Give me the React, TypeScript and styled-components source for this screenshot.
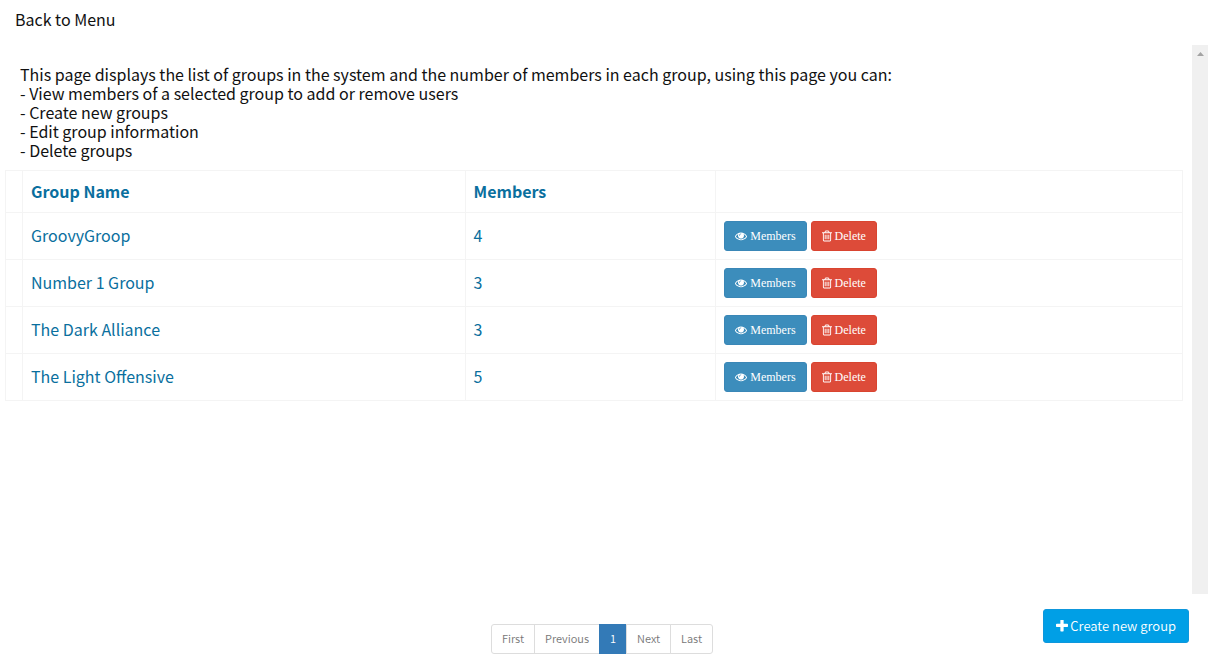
import React from "react";
import styled, { createGlobalStyle, css } from "styled-components";

const GlobalStyle = createGlobalStyle`
  *, *::before, *::after { box-sizing: border-box; }
  body {
    margin: 0;
    background: #fff;
    color: #111;
    font: 16px/19px "Noto Sans CJK SC", "Noto Sans", sans-serif;
  }
`;

const Page = styled.div`
  display: flex;
  flex-direction: column;
  min-height: 100vh;
`;

const Header = styled.header`
  padding: 10px 15px 16px;
`;

const BackLink = styled.a`
  display: inline-block;
  color: inherit;
  text-decoration: none;
`;

const Body = styled.div`
  display: flex;
  flex: 1;
`;

const Content = styled.main`
  flex: 1;
  min-width: 0;
  padding: 20px 9px 0 5px;
`;

const ScrollTrack = styled.div`
  display: flex;
  justify-content: center;
  width: 16px;
  padding-top: 7px;
  background: #f0f0f0;
`;

const ScrollArrow = styled.svg`
  width: 7px;
  height: 4px;
  fill: #a3a3a3;
`;

const Intro = styled.p`
  margin: 0;
  padding: 0 15px;
`;

const IntroList = styled.ul`
  margin: 0 0 10px;
  padding: 0 15px;
  list-style: none;

  li::before { content: "- "; }
`;

const Table = styled.table`
  width: 100%;
  border-collapse: collapse;
  table-layout: fixed;
  color: #0a6f9e;
`;

const Column = styled.col<{ $width: string }>`
  width: ${(p) => p.$width};
`;

const cell = css`
  padding: 8px;
  border: 1px solid #f4f4f4;
  text-align: left;
  vertical-align: middle;
`;

const HeadCell = styled.th`
  ${cell}
  height: 42px;
  font-weight: 700;
`;

const Cell = styled.td`
  ${cell}
  height: 47px;
`;

const TextCell = styled(Cell)`
  padding: 7px 8px 9px;
`;

const Actions = styled.div`
  display: flex;
  gap: 4px;
`;

const ActionButton = styled.button<{ $tone: "view" | "danger" }>`
  display: flex;
  align-items: center;
  gap: 3px;
  height: 30px;
  padding: 0 10px;
  border: 1px solid ${(p) => (p.$tone === "view" ? "#3a87b7" : "#d94430")};
  border-radius: 3px;
  background: ${(p) => (p.$tone === "view" ? "#3c8dbc" : "#dd4b39")};
  color: #fff;
  font: 12px/18px "Liberation Serif", serif;
`;

const Glyph = styled.svg<{ $width: number; $height: number }>`
  width: ${(p) => p.$width}px;
  height: ${(p) => p.$height}px;
  fill: currentColor;
`;

const Footer = styled.footer`
  display: grid;
  grid-template-columns: 1fr auto 1fr;
  align-items: start;
  min-height: 72px;
  padding: 15px 19px 12px 15px;
`;

const Pager = styled.nav`
  display: flex;
  grid-column: 2;
  margin-top: 15px;
`;

const PageButton = styled.button<{ $current?: boolean }>`
  height: 30px;
  margin-left: -1px;
  padding: 0 10px 2px;
  border: 1px solid ${(p) => (p.$current ? "#337ab7" : "#ddd")};
  background: ${(p) => (p.$current ? "#337ab7" : "#fff")};
  color: ${(p) => (p.$current ? "#fff" : "#777")};
  font: 350 11px/18px "Noto Sans CJK SC", "Noto Sans", sans-serif;

  &:first-child {
    margin-left: 0;
    border-radius: 3px 0 0 3px;
  }
  &:last-child { border-radius: 0 3px 3px 0; }
`;

const CreateButton = styled.button`
  display: flex;
  align-items: center;
  justify-self: end;
  gap: 2px;
  height: 34px;
  padding: 0 12px;
  border: 1px solid #0e97dc;
  border-radius: 3px;
  background: #009fe6;
  color: #fff;
  font: 350 13px/20px "Noto Sans CJK SC", "Noto Sans", sans-serif;
`;

const EyeIcon = () => (
  <Glyph $width={12} $height={12} viewBox="0 0 1792 1792" aria-hidden="true">
    <path d="M1664 960q-152-236-381-353 61 104 61 225 0 185-131.5 316.5t-316.5 131.5-316.5-131.5-131.5-316.5q0-121 61-225-229 117-381 353 133 205 333.5 326.5t434.5 121.5 434.5-121.5 333.5-326.5zm-720-384q0-20-14-34t-34-14q-125 0-214.5 89.5t-89.5 214.5q0 20 14 34t34 14 34-14 14-34q0-86 61-147t147-61q20 0 34-14t14-34zm848 384q0 34-20 69-140 230-376.5 368.5t-499.5 138.5-499.5-139-376.5-368q-20-35-20-69t20-69q140-229 376.5-368t499.5-139 499.5 139 376.5 368q20 35 20 69z" />
  </Glyph>
);

const TrashIcon = () => (
  <Glyph $width={10} $height={12} viewBox="192 80 1408 1632" aria-hidden="true">
    <path d="M704 736v576q0 14-9 23t-23 9h-64q-14 0-23-9t-9-23v-576q0-14 9-23t23-9h64q14 0 23 9t9 23zm256 0v576q0 14-9 23t-23 9h-64q-14 0-23-9t-9-23v-576q0-14 9-23t23-9h64q14 0 23 9t9 23zm256 0v576q0 14-9 23t-23 9h-64q-14 0-23-9t-9-23v-576q0-14 9-23t23-9h64q14 0 23 9t9 23zm128 724v-948h-896v948q0 22 7 40.5t14.5 27 10.5 8.5h832q3 0 10.5-8.5t14.5-27 7-40.5zm-672-1076h448l-48-117q-7-9-17-11h-317q-10 2-17 11zm928 32v64q0 14-9 23t-23 9h-96v948q0 83-47 143.5t-113 60.5h-832q-66 0-113-58.5t-47-141.5v-952h-96q-14 0-23-9t-9-23v-64q0-14 9-23t23-9h309l70-167q15-37 54-63t79-26h320q40 0 79 26t54 63l70 167h309q14 0 23 9t9 23z" />
  </Glyph>
);

const PlusIcon = () => (
  <Glyph $width={12} $height={12} viewBox="192 192 1408 1408" aria-hidden="true">
    <path d="M1600 736v192q0 40-28 68t-68 28h-416v416q0 40-28 68t-68 28h-192q-40 0-68-28t-28-68v-416h-416q-40 0-68-28t-28-68v-192q0-40 28-68t68-28h416v-416q0-40 28-68t68-28h192q40 0 68 28t28 68v416h416q40 0 68 28t28 68z" />
  </Glyph>
);

const groups = [
  { name: "GroovyGroop", members: 4 },
  { name: "Number 1 Group", members: 3 },
  { name: "The Dark Alliance", members: 3 },
  { name: "The Light Offensive", members: 5 },
];

export default function App() {
  return (
    <Page>
      <GlobalStyle />
      <Header>
        <BackLink href="#menu">Back to Menu</BackLink>
      </Header>
      <Body>
        <Content>
          <Intro>
            This page displays the list of groups in the system and the number of members in each
            group, using this page you can:
          </Intro>
          <IntroList>
            <li>View members of a selected group to add or remove users</li>
            <li>Create new groups</li>
            <li>Edit group information</li>
            <li>Delete groups</li>
          </IntroList>
          <Table>
            <colgroup>
              <Column $width="17px" />
              <Column $width="37.6%" />
              <Column $width="21.3%" />
              <Column $width="auto" />
            </colgroup>
            <thead>
              <tr>
                <HeadCell />
                <HeadCell scope="col">Group Name</HeadCell>
                <HeadCell scope="col">Members</HeadCell>
                <HeadCell />
              </tr>
            </thead>
            <tbody>
              {groups.map((group) => (
                <tr key={group.name}>
                  <Cell />
                  <TextCell>{group.name}</TextCell>
                  <TextCell>{group.members}</TextCell>
                  <Cell>
                    <Actions>
                      <ActionButton type="button" $tone="view">
                        <EyeIcon />
                        Members
                      </ActionButton>
                      <ActionButton type="button" $tone="danger">
                        <TrashIcon />
                        Delete
                      </ActionButton>
                    </Actions>
                  </Cell>
                </tr>
              ))}
            </tbody>
          </Table>
        </Content>
        <ScrollTrack aria-hidden="true">
          <ScrollArrow viewBox="0 0 7 4">
            <path d="M3.5 0 7 4H0z" />
          </ScrollArrow>
        </ScrollTrack>
      </Body>
      <Footer>
        <Pager aria-label="Pages">
          <PageButton type="button">First</PageButton>
          <PageButton type="button">Previous</PageButton>
          <PageButton type="button" $current aria-current="page">
            1
          </PageButton>
          <PageButton type="button">Next</PageButton>
          <PageButton type="button">Last</PageButton>
        </Pager>
        <CreateButton type="button">
          <PlusIcon />
          Create new group
        </CreateButton>
      </Footer>
    </Page>
  );
}
